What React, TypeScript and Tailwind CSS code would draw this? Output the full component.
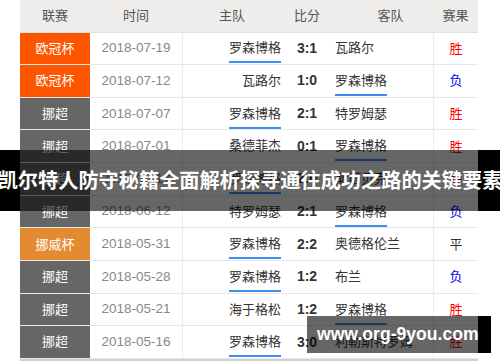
import React from 'react';

type Match = {
  league: string;
  date: string;
  home: string;
  score: string;
  away: string;
  result: string;
};

const matches: Match[] = [
  { league: '欧冠杯', date: '2018-07-19', home: '罗森博格', score: '3:1', away: '瓦路尔', result: '胜' },
  { league: '欧冠杯', date: '2018-07-12', home: '瓦路尔', score: '1:0', away: '罗森博格', result: '负' },
  { league: '挪超', date: '2018-07-07', home: '罗森博格', score: '2:1', away: '特罗姆瑟', result: '胜' },
  { league: '挪超', date: '2018-07-01', home: '桑德菲杰', score: '0:1', away: '罗森博格', result: '胜' },
  { league: '挪超', date: '2018-06-17', home: '罗森博格', score: '2:0', away: '斯塔贝克', result: '胜' },
  { league: '挪超', date: '2018-06-12', home: '特罗姆瑟', score: '2:1', away: '罗森博格', result: '负' },
  { league: '挪威杯', date: '2018-05-31', home: '罗森博格', score: '2:2', away: '奥德格伦兰', result: '平' },
  { league: '挪超', date: '2018-05-28', home: '罗森博格', score: '1:2', away: '布兰', result: '负' },
  { league: '挪超', date: '2018-05-21', home: '海于格松', score: '1:2', away: '罗森博格', result: '胜' },
  { league: '挪超', date: '2018-05-16', home: '罗森博格', score: '3:0', away: '利勒斯特罗姆', result: '胜' },
];

const leagueBg: Record<string, string> = {
  '欧冠杯': 'bg-[#fe5500]',
  '挪威杯': 'bg-[#e48b32]',
  '挪超': 'bg-[#666666]',
};

const resultColor: Record<string, string> = {
  '胜': 'text-[#ff0000]',
  '负': 'text-[#0000ff]',
  '平': 'text-[#333333]',
};

function Team({ name }: { name: string }) {
  if (name !== '罗森博格') return <span className="leading-4">{name}</span>;
  return (
    <span className="leading-4 pt-[7px] pb-[5px] border-b-2 border-[#3d8ef0]">{name}</span>
  );
}

export default function App() {
  return (
    <div
      className="relative w-[500px] h-[362px] bg-white overflow-hidden"
      style={{ fontFamily: '"Liberation Sans", "Noto Sans CJK SC", sans-serif' }}
    >
      <div className="ml-[20px] w-[458px]">
        {/* header */}
        <div className="grid grid-cols-[70px_92px_100px_50px_101px_45px] h-[32.5px] bg-[#efedeb] border-b border-[#e2e2e2] text-[13px] text-[#555]">
          <div className="flex items-center justify-center">联赛</div>
          <div className="flex items-center justify-center">时间</div>
          <div className="flex items-center justify-center">主队</div>
          <div className="flex items-center justify-center">比分</div>
          <div className="flex items-center justify-center pl-[16px]">客队</div>
          <div className="flex items-center justify-center">赛果</div>
        </div>

        {matches.map((m, i) => (
          <div
            key={i}
            className="grid grid-cols-[70px_92px_100px_50px_101px_45px] h-[32.67px] border-b border-[#e8e8e8]"
          >
            <div className={`flex items-center justify-center text-[13px] text-white ${leagueBg[m.league]}`}>
              {m.league}
            </div>
            <div className="flex items-center justify-center text-[13.5px] text-[#888]">{m.date}</div>
            <div className="flex items-center justify-end pr-[1px] border-l border-[#ececec] text-[13px] text-[#333]">
              <Team name={m.home} />
            </div>
            <div className="flex items-center justify-center text-[14px] font-bold text-[#333]">{m.score}</div>
            <div className="flex items-center justify-start pl-[3px] text-[13px] text-[#333]">
              <Team name={m.away} />
            </div>
            <div className={`flex items-center justify-center border-l border-[#ececec] text-[13px] ${resultColor[m.result]}`}>
              {m.result}
            </div>
          </div>
        ))}
        <div className="h-[2px] bg-[#cfcfcf]" />
      </div>

      {/* title banner */}
      <div className="absolute left-0 top-[150px] w-[500px] h-[61px] flex">
        <div className="w-[20px] bg-black" />
        <div className="w-[458px] bg-black/60" />
        <div className="flex-1 bg-black" />
      </div>
      <div className="absolute left-0 top-[150px] w-[500px] h-[61px] flex items-center justify-center">
        <span
          className="whitespace-nowrap text-white font-bold text-[20.2px] leading-none"
          style={{ fontFamily: '"Noto Sans CJK SC", sans-serif' }}
        >
          凯尔特人防守秘籍全面解析探寻通往成功之路的关键要素
        </span>
      </div>

      {/* watermark */}
      <div className="absolute left-[307px] top-[316px] w-[184px] h-[37px] flex">
        <div className="w-[171px] bg-black/60" />
        <div className="flex-1 bg-black" />
      </div>
      <div className="absolute left-[317px] top-[316px] h-[37px] flex items-center">
        <span className="whitespace-nowrap text-white font-bold text-[17.6px] leading-none">www.org-9you.com</span>
      </div>
    </div>
  );
}
